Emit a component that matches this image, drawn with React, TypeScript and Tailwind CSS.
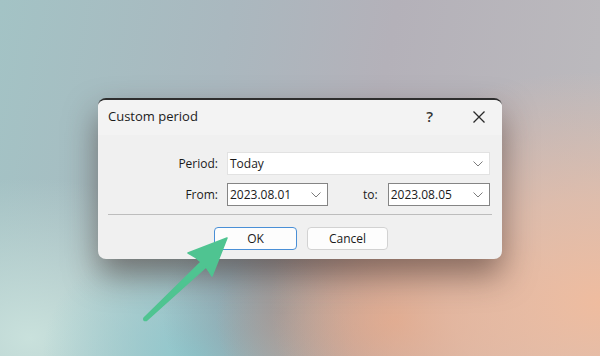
function Chevron() {
  return (
    <svg width="10" height="6" viewBox="0 0 10 6" className="shrink-0">
      <path d="M0.5 0.5 L5 5 L9.5 0.5" fill="none" stroke="#7c7c7c" strokeWidth="1" />
    </svg>
  );
}

function Select({ value, className }: { value: string; className: string }) {
  return (
    <div className={`flex h-[23px] items-center justify-between bg-white pl-[2px] pr-[6px] ${className}`}>
      <span className="text-[12px] leading-none text-[#1a1a1a]">{value}</span>
      <Chevron />
    </div>
  );
}

export default function App() {
  return (
    <div
      className="relative h-[356px] w-[600px] overflow-hidden pl-[98px] pt-[98px] bg-[radial-gradient(ellipse_55%_65%_at_100%_85%,#efbc9f_0%,rgba(236,190,165,0.7)_45%,transparent_100%),radial-gradient(ellipse_30%_35%_at_66%_90%,#d69c80_0%,transparent_100%),radial-gradient(ellipse_20%_30%_at_47%_88%,#8a9aa4_0%,transparent_100%),radial-gradient(ellipse_26%_36%_at_33%_100%,#8ec8cd_0%,transparent_100%),radial-gradient(ellipse_35%_45%_at_5%_95%,#c9e1dc_0%,transparent_100%),linear-gradient(100deg,#a3c3c5_0%,#aab8bf_35%,#b4b1b9_60%,#bdbbbe_100%)]"
      style={{ fontFamily: '"Open Sans", "Noto Sans", sans-serif' }}
    >
      {/* Dialog */}
      <div className="w-[404px] overflow-hidden rounded-[8px] border-t-2 border-[#2e2e2e] bg-[#f0f0f0] shadow-[0_16px_32px_rgba(50,30,25,0.5)]">
        {/* Title bar */}
        <div className="flex h-[35px] items-center bg-[#f3f3f3] pl-[10px]">
          <span className="-mt-[2px] text-[13px] text-[#1c1c1c]">Custom period</span>
          <span className="-mt-[2px] ml-auto mr-[40px] text-[15px] font-semibold text-[#333]">?</span>
          <svg width="12" height="12" viewBox="0 0 12 12" className="-mt-[2px] mr-[17px]">
            <path d="M0.5 0.5 L11.5 11.5 M11.5 0.5 L0.5 11.5" stroke="#2a2a2a" strokeWidth="1.3" />
          </svg>
        </div>

        {/* Body */}
        <div className="pb-[9px] pt-[17px]">
          <div className="flex items-center pr-[12px]">
            <span className="w-[120px] text-right text-[12px] text-[#1a1a1a]">Period:</span>
            <Select value="Today" className="ml-[9px] flex-1 border border-[#e2e2e2]" />
          </div>
          <div className="mt-[8px] flex items-center pr-[12px]">
            <span className="w-[120px] text-right text-[12px] text-[#1a1a1a]">From:</span>
            <Select value="2023.08.01" className="ml-[9px] w-[101px] border border-[#858585]" />
            <span className="ml-[35px] text-[12px] text-[#1a1a1a]">to:</span>
            <Select value="2023.08.05" className="ml-[10px] flex-1 border border-[#858585]" />
          </div>

          <div className="mx-[10px] mt-[8px] h-px bg-[#bdbdbd]" />

          <div className="mt-[12px] flex pl-[116px]">
            <button className="h-[23px] w-[83px] rounded-[4px] border border-[#4a8fd6] bg-[#fdfdfd] text-[12px] text-[#1a1a1a]">
              OK
            </button>
            <button className="ml-[10px] h-[23px] w-[81px] rounded-[4px] border border-[#d2d2d2] bg-[#fdfdfd] text-[12px] text-[#1a1a1a]">
              Cancel
            </button>
          </div>
        </div>
      </div>

      {/* Green pointer arrow */}
      <svg className="absolute left-0 top-0" width="600" height="356" viewBox="0 0 600 356">
        <path
          d="M227 238 L188 253 Q196 257 201 262 L144 318 Q143 321 146.5 320.5 L206 267 Q209 271 212 276 Z"
          fill="#4fc491"
          stroke="#4fc491"
          strokeWidth="1.5"
          strokeLinejoin="round"
        />
      </svg>
    </div>
  );
}
